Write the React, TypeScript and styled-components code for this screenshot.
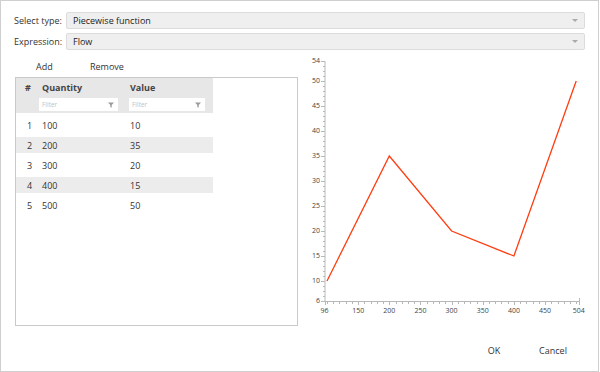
import React from 'react';
import styled, { createGlobalStyle } from 'styled-components';

const GlobalStyle = createGlobalStyle`
  html, body { margin: 0; padding: 0; background: #fff; }
  body {
    font-family: 'Open Sans', 'Noto Sans', sans-serif;
    font-size: 9px;
    color: #333;
  }
`;

interface IPoint {
  quantity: number;
  value: number;
}

const points: IPoint[] = [
  { quantity: 100, value: 10 },
  { quantity: 200, value: 35 },
  { quantity: 300, value: 20 },
  { quantity: 400, value: 15 },
  { quantity: 500, value: 50 },
];

const Frame = styled.div`
  box-sizing: border-box;
  width: 599px;
  height: 372px;
  border: 1px solid #cfcfcf;
  padding: 11px 13px 0 13px;
  display: flex;
  flex-direction: column;
`;

const Form = styled.div`
  display: flex;
  flex-direction: column;
  gap: 4px;
`;

const FormRow = styled.div`
  display: grid;
  grid-template-columns: 52px 1fr;
  align-items: center;
  height: 17px;
`;

const Label = styled.span`
  white-space: nowrap;
  color: #333;
`;

const Select = styled.div`
  box-sizing: border-box;
  height: 17px;
  display: flex;
  align-items: center;
  justify-content: space-between;
  padding: 0 6px 0 6px;
  background: #efefef;
  border: 1px solid #dcdcdc;
  border-radius: 2px;
  color: #222;
`;

const Caret = styled.span`
  width: 0;
  height: 0;
  border-left: 3px solid transparent;
  border-right: 3px solid transparent;
  border-top: 3px solid #aaa;
`;

const Body = styled.div`
  display: flex;
  margin-top: 3px;
`;

const LeftPane = styled.div`
  flex: 0 0 283px;
  margin-left: 1px;
  display: flex;
  flex-direction: column;
`;

const Toolbar = styled.div`
  box-sizing: border-box;
  height: 24px;
  padding: 3px 0 0 21px;
  display: flex;
  align-items: center;
`;

const ToolButton = styled.span`
  width: 54px;
  color: #333;
`;

const TableBox = styled.div`
  box-sizing: border-box;
  height: 249px;
  border: 1px solid #c9c9c9;
`;

const Grid = styled.div`
  width: 197px;
`;

const Header = styled.div`
  background: #e7e7e7;
  padding-bottom: 1px;
`;

const Row = styled.div<{ $height: number; $alt?: boolean }>`
  display: grid;
  grid-template-columns: 22px 90px 85px;
  align-items: center;
  height: ${(p) => p.$height}px;
  background: ${(p) => (p.$alt ? '#ececec' : 'transparent')};
`;

const Cell = styled.div<{ $pad: number; $bold?: boolean }>`
  padding-left: ${(p) => p.$pad}px;
  font-weight: ${(p) => (p.$bold ? 700 : 400)};
  color: ${(p) => (p.$bold ? '#444' : '#333')};
  white-space: nowrap;
`;

const Filter = styled.div<{ $width: number }>`
  box-sizing: border-box;
  width: ${(p) => p.$width}px;
  height: 13px;
  margin-left: 1px;
  padding: 0 4px 0 3px;
  background: #fff;
  display: flex;
  align-items: center;
  justify-content: space-between;
  font-size: 6.5px;
  color: #c2c2c2;
`;

const Rows = styled.div`
  padding-top: 4px;
  display: flex;
  flex-direction: column;
  gap: 4px;
`;

const Chart = styled.svg`
  display: block;
  flex: 0 0 285px;
  margin-left: 2px;
  font-family: 'Open Sans', 'Noto Sans', sans-serif;
`;

const Footer = styled.div`
  display: flex;
  justify-content: flex-end;
  gap: 9px;
  margin-top: 13px;
  padding-right: 7px;
`;

const Button = styled.button`
  width: 50px;
  height: 22px;
  padding: 0;
  border: none;
  background: transparent;
  font-family: 'Open Sans', 'Noto Sans', sans-serif;
  font-size: 9px;
  color: #333;
`;

const Funnel = () => (
  <svg width="6" height="6" viewBox="0 0 6 6">
    <path d="M0 0.5 H6 L3.7 3 V5.8 L2.3 5 V3 Z" fill="#9a9a9a" />
  </svg>
);

// chart scale, in page coordinates
const xs = (v: number) => 324.5 + ((v - 96) * 254.2) / 408;
const ys = (v: number) => 300 - (v - 6) * 5;

const yLabels = [6, 10, 15, 20, 25, 30, 35, 40, 45, 50, 54];
const xLabels = [96, 150, 200, 250, 300, 350, 400, 450, 504];

const LineChart: React.FC<{ data: IPoint[] }> = ({ data }) => {
  const yMinor: number[] = [];
  for (let v = 6; v <= 54; v++) yMinor.push(v);
  const xMinor: number[] = [];
  for (let v = 100; v <= 500; v += 10) xMinor.push(v);

  return (
    <Chart width="285" height="265" viewBox="300 52 285 265">
      <line x1="325" y1="60" x2="325" y2="300" stroke="#b8b8b8" strokeWidth="1" />
      <line x1="325" y1="300.5" x2="579" y2="300.5" stroke="#b8b8b8" strokeWidth="1" />
      {yMinor.map((v) => (
        <line
          key={'ym' + v}
          x1={yLabels.includes(v) ? 321 : 323}
          y1={ys(v) + 0.5}
          x2="325"
          y2={ys(v) + 0.5}
          stroke="#b8b8b8"
          strokeWidth="1"
        />
      ))}
      {xMinor.map((v) => (
        <line
          key={'xm' + v}
          x1={Math.round(xs(v)) + 0.5}
          y1="300"
          x2={Math.round(xs(v)) + 0.5}
          y2="303"
          stroke="#b8b8b8"
          strokeWidth="1"
        />
      ))}
      {xLabels.map((v) => (
        <line
          key={'xt' + v}
          x1={Math.round(xs(v)) + 0.5}
          y1={v === 504 ? 297 : 300}
          x2={Math.round(xs(v)) + 0.5}
          y2="304"
          stroke="#b8b8b8"
          strokeWidth="1"
        />
      ))}
      {yLabels.map((v) => (
        <text key={'yl' + v} x="320" y={ys(v)} dy="0.35em" textAnchor="end" fontSize="7" fill="#444">
          {v}
        </text>
      ))}
      {xLabels.map((v) => (
        <text key={'xl' + v} x={xs(v)} y="312" textAnchor="middle" fontSize="7" fill="#444">
          {v}
        </text>
      ))}
      <polyline
        points={data.map((p) => `${xs(p.quantity)},${ys(p.value)}`).join(' ')}
        fill="none"
        stroke="#ff3d10"
        strokeWidth="1.3"
        strokeLinejoin="miter"
      />
    </Chart>
  );
};

const App: React.FC = () => {
  return (
    <>
      <GlobalStyle />
      <Frame>
        <Form>
          <FormRow>
            <Label>Select type:</Label>
            <Select>
              <span>Piecewise function</span>
              <Caret />
            </Select>
          </FormRow>
          <FormRow>
            <Label>Expression:</Label>
            <Select>
              <span>Flow</span>
              <Caret />
            </Select>
          </FormRow>
        </Form>

        <Body>
          <LeftPane>
            <Toolbar>
              <ToolButton>Add</ToolButton>
              <ToolButton>Remove</ToolButton>
            </Toolbar>
            <TableBox>
              <Grid>
                <Header>
                  <Row $height={19}>
                    <Cell $pad={9} $bold>#</Cell>
                    <Cell $pad={4} $bold>Quantity</Cell>
                    <Cell $pad={2} $bold>Value</Cell>
                  </Row>
                  <Row $height={15}>
                    <div />
                    <Filter $width={79}>
                      <span>Filter</span>
                      <Funnel />
                    </Filter>
                    <Filter $width={76}>
                      <span>Filter</span>
                      <Funnel />
                    </Filter>
                  </Row>
                </Header>
                <Rows>
                  {points.map((p, i) => (
                    <Row key={p.quantity} $height={16} $alt={i % 2 === 1}>
                      <Cell $pad={11}>{i + 1}</Cell>
                      <Cell $pad={4}>{p.quantity}</Cell>
                      <Cell $pad={2}>{p.value}</Cell>
                    </Row>
                  ))}
                </Rows>
              </Grid>
            </TableBox>
          </LeftPane>
          <LineChart data={points} />
        </Body>

        <Footer>
          <Button>OK</Button>
          <Button>Cancel</Button>
        </Footer>
      </Frame>
    </>
  );
};

export default App;
